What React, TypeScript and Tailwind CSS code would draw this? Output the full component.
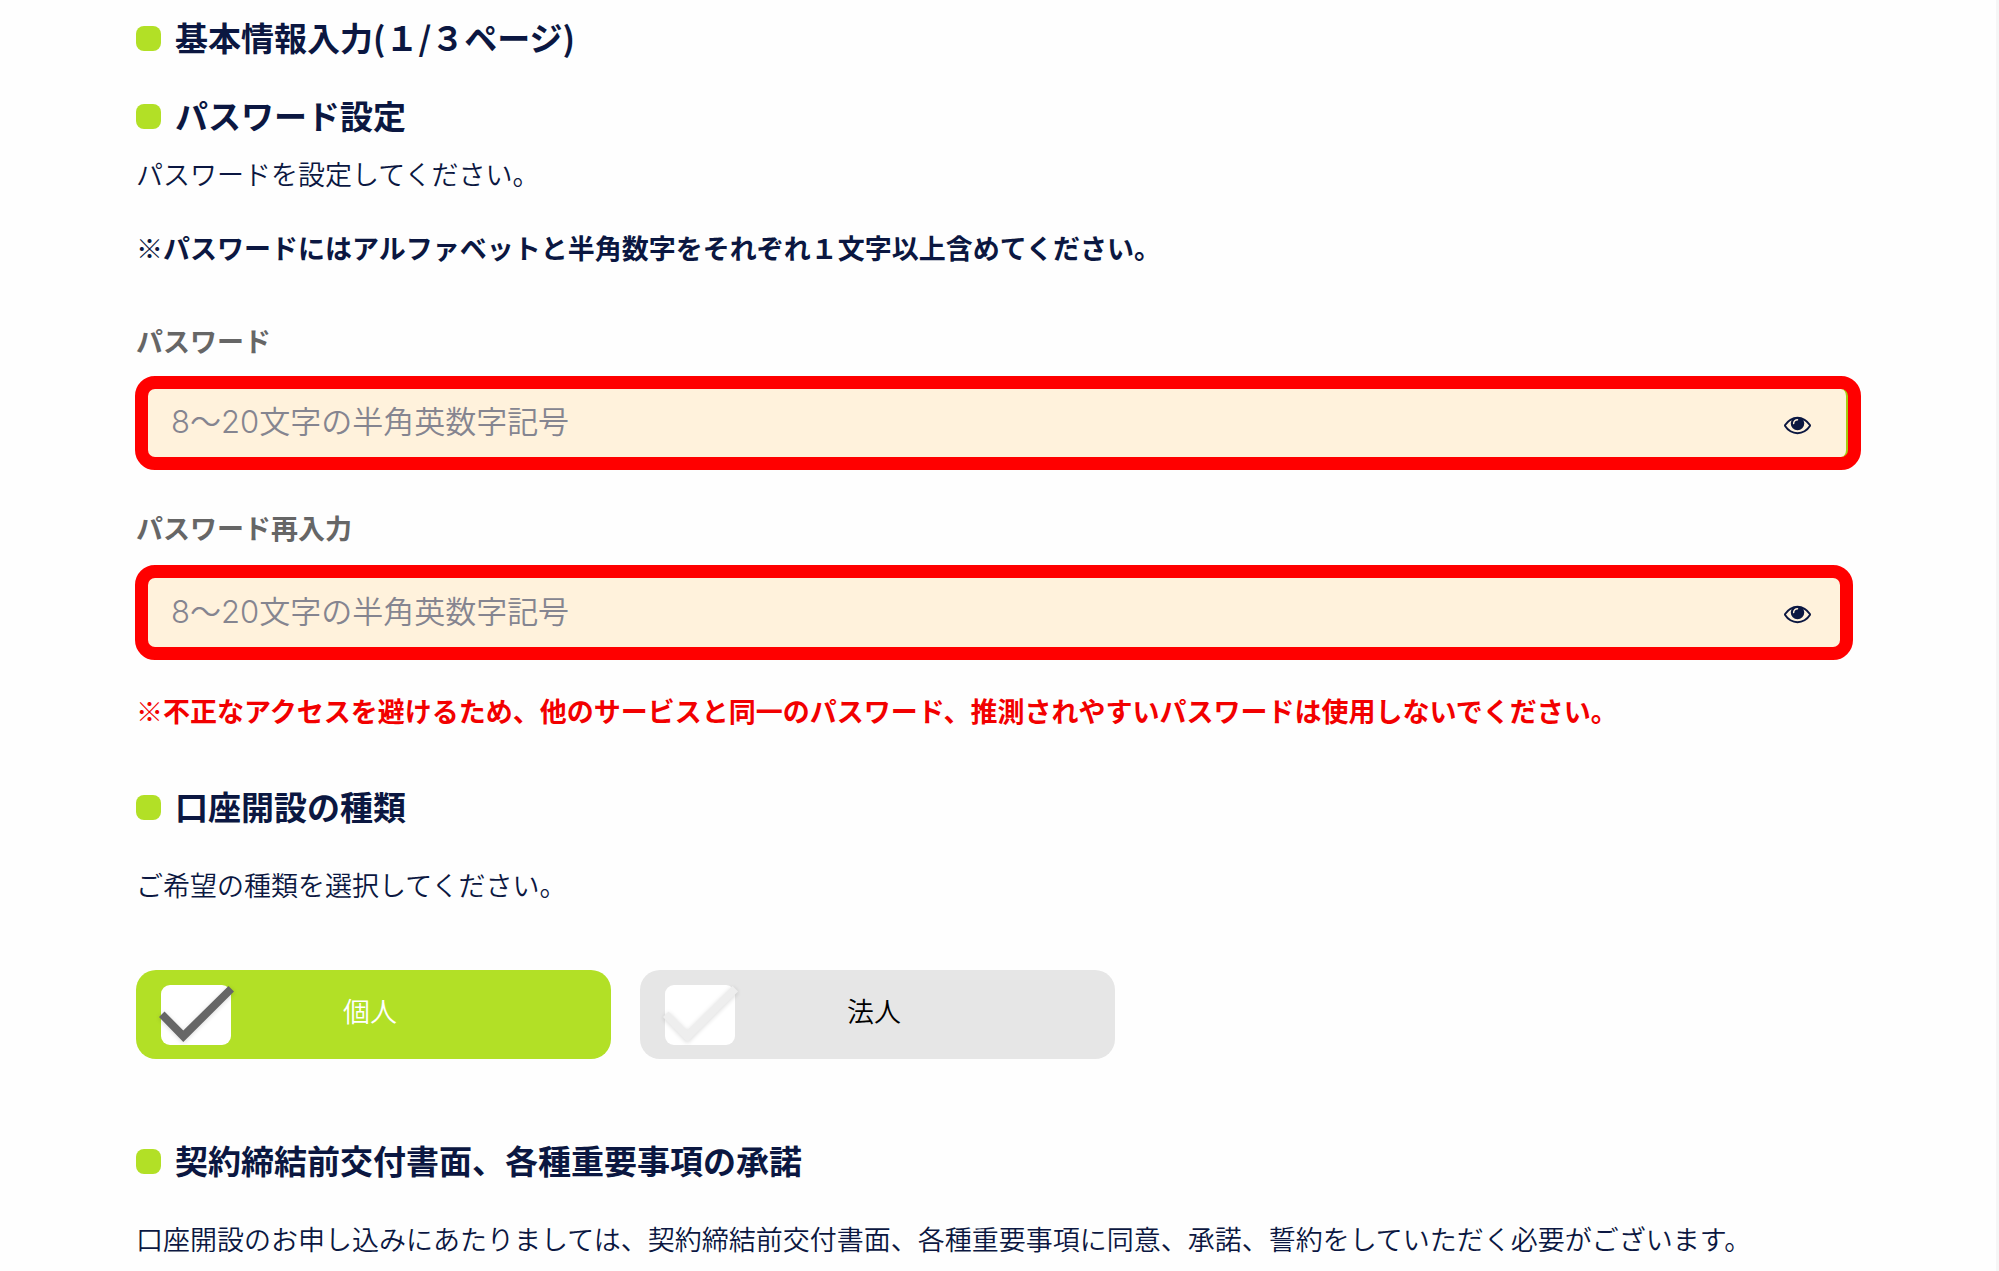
import { useState } from "react";
import type { ReactNode } from "react";
import clsx from "clsx";

function SectionHeading({ children, className }: { children: ReactNode; className?: string }) {
  return (
    <h2 className={clsx("flex items-center gap-3.5 text-[33px] leading-[48px] font-bold", className)}>
      <span className="size-[25px] shrink-0 rounded-lg bg-[#b2e026]" />
      <span className="pb-0.5 leading-[46px]">{children}</span>
    </h2>
  );
}

function EyeIcon() {
  return (
    <svg className="size-[27px]" viewBox="0 0 1792 1792" fill="currentColor" aria-hidden="true">
      <path d="M1664 960q-152-236-381-353 61 104 61 225 0 185-131.5 316.5t-316.5 131.5-316.5-131.5-131.5-316.5q0-121 61-225-229 117-381 353 133 205 333.5 326.5t434.5 121.5 434.5-121.5 333.5-326.5zm-720-384q0-20-14-34t-34-14q-125 0-214.5 89.5t-89.5 214.5q0 20 14 34t34 14 34-14 14-34q0-86 61-147t147-61q20 0 34-14t14-34zm848 384q0 34-20 69-140 230-376.5 368.5t-499.5 138.5-499.5-139-376.5-368q-20-35-20-69t20-69q140-229 376.5-368t499.5-139 499.5 139 376.5 368q20 35 20 69z" />
    </svg>
  );
}

function PasswordField({ id, label, className, boxClassName }: { id: string; label: string; className?: string; boxClassName: string }) {
  const [visible, setVisible] = useState(false);

  return (
    <div className={clsx("flex flex-col", className)}>
      <label htmlFor={id} className="text-[27px] leading-10 font-bold text-[#666666]">
        {label}
      </label>
      <div className={clsx("-ml-px flex rounded-[20px] border-[13px] border-[#ff0000] bg-[#ff0000]", boxClassName)}>
        <div className="flex flex-1 items-center rounded-[7px] bg-[#fff2dc] pl-[23px]">
          <input
            id={id}
            type={visible ? "text" : "password"}
            placeholder="8〜20文字の半角英数字記号"
            className="min-w-0 flex-1 bg-transparent pb-0.5 font-['Inter','Noto_Sans_CJK_JP',sans-serif] text-[31px] leading-[48px] font-[350] outline-none placeholder:text-[#858590]"
          />
          <button type="button" aria-label="パスワードを表示" className="pt-0.5" onClick={() => setVisible(!visible)}>
            <EyeIcon />
          </button>
        </div>
      </div>
    </div>
  );
}

function AccountOption({ label, checked, onSelect }: { label: string; checked: boolean; onSelect: () => void }) {
  return (
    <label
      className={clsx(
        "flex h-[89px] w-[475px] cursor-pointer items-center rounded-[20px] pl-[25px] text-[27px] leading-10 font-[350]",
        checked ? "bg-[#b2e026] text-white" : "bg-[#e6e6e6] text-black"
      )}
    >
      <span className="relative flex">
        <input
          type="radio"
          name="account-type"
          checked={checked}
          onChange={onSelect}
          className="h-[60px] w-[70px] appearance-none rounded-[9px] bg-white"
        />
        <svg
          className={clsx(
            "pointer-events-none absolute top-0 left-0 h-[60px] w-[70px] overflow-visible drop-shadow-sm",
            checked ? "text-[#666666]" : "text-[#eeeeee]"
          )}
          viewBox="0 0 70 60"
          fill="currentColor"
          aria-hidden="true"
        >
          <path d="M-2 32 L3.5 26.5 L22.3 45.5 L67.5 1 L73 6.5 L22.3 57 Z" />
        </svg>
      </span>
      <span className="flex-1 pr-[102px] pb-2 text-center">{label}</span>
    </label>
  );
}

export default function App() {
  const [accountType, setAccountType] = useState("個人");

  return (
    <main className="border-r-[3px] border-[#f6f6f6] bg-[#fefefe] pt-3.5 pr-[135px] pb-3 pl-[136px] font-['Noto_Sans_CJK_JP',sans-serif] text-[27px] leading-10 text-[#0b1741]">
      <SectionHeading>基本情報入力(１/３ページ)</SectionHeading>

      <SectionHeading className="mt-[30px]">パスワード設定</SectionHeading>
      <p className="mt-3.5 font-[350]">パスワードを設定してください。</p>
      <p className="mt-[34px] font-bold">※パスワードにはアルファベットと半角数字をそれぞれ１文字以上含めてください。</p>

      <PasswordField
        id="password"
        label="パスワード"
        className="mt-[53px]"
        boxClassName="mt-[15px] h-[94px] [&>div]:border-r-2 [&>div]:border-[#a5cc10] [&>div]:pr-[35px]"
      />
      <PasswordField
        id="password-confirm"
        label="パスワード再入力"
        className="mt-[38px]"
        boxClassName="mt-[17px] mr-2 h-[95px] [&>div]:pr-[29px]"
      />
      <p className="mt-[31px] font-bold text-[#f20000]">
        ※不正なアクセスを避けるため、他のサービスと同一のパスワード、推測されやすいパスワードは使用しないでください。
      </p>

      <SectionHeading className="mt-[52px]">口座開設の種類</SectionHeading>
      <p className="mt-[34px] font-[350]">ご希望の種類を選択してください。</p>
      <div className="mt-[65px] flex gap-[29px]">
        {["個人", "法人"].map((type) => (
          <AccountOption key={type} label={type} checked={accountType === type} onSelect={() => setAccountType(type)} />
        ))}
      </div>

      <SectionHeading className="mt-[78px]">契約締結前交付書面、各種重要事項の承諾</SectionHeading>
      <p className="mt-[34px] font-[350]">
        口座開設のお申し込みにあたりましては、契約締結前交付書面、各種重要事項に同意、承諾、誓約をしていただく必要がございます。
      </p>
    </main>
  );
}
